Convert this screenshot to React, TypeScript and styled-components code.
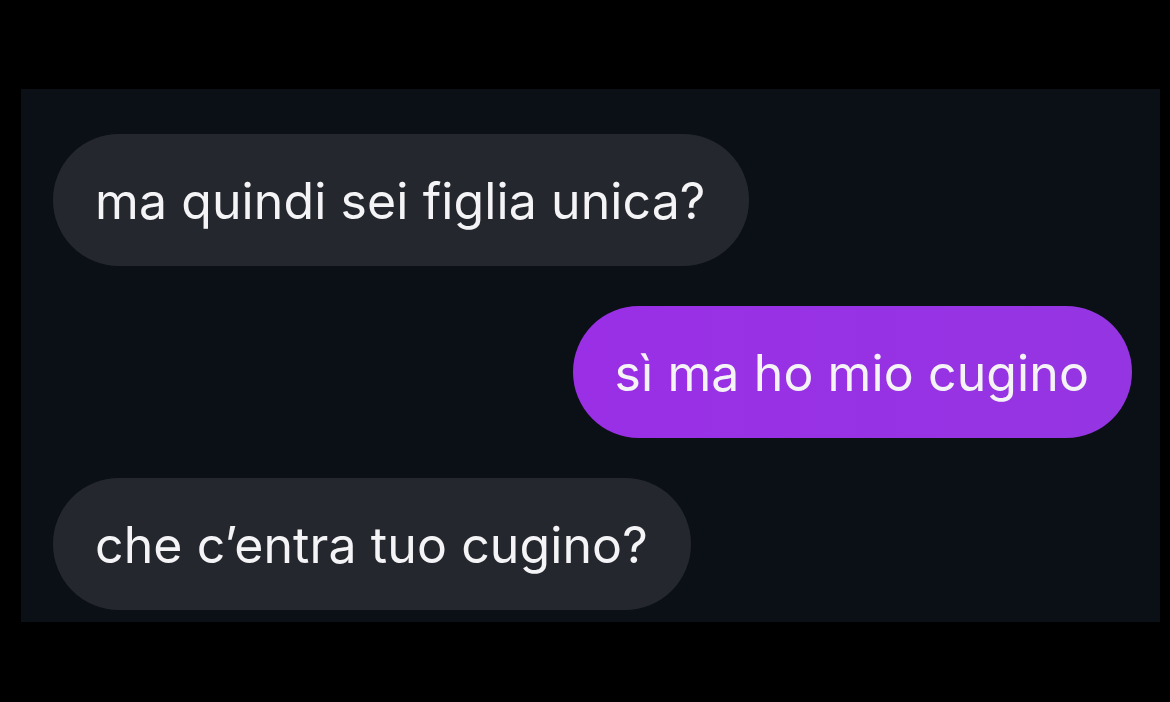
import React from "react";
import styled, { createGlobalStyle } from "styled-components";

const Global = createGlobalStyle`
  html, body { margin: 0; padding: 0; background: #000; }
  body { width: 1170px; height: 702px; overflow: hidden; }
`;

const Screen = styled.div`
  width: 1170px;
  height: 702px;
  background: #000;
  padding: 89px 10px 0 21px;
  box-sizing: border-box;
`;

const Panel = styled.div`
  width: 1139px;
  height: 533px;
  background: #0b1017;
  box-sizing: border-box;
  padding: 45px 28px 0 32px;
  display: flex;
  flex-direction: column;
  gap: 40px;
  overflow: hidden;
`;

const Row = styled.div<{ $mine?: boolean }>`
  display: flex;
  justify-content: ${(p) => (p.$mine ? "flex-end" : "flex-start")};
`;

const Bubble = styled.div<{ $mine?: boolean }>`
  height: 132px;
  border-radius: 66px;
  box-sizing: border-box;
  padding: 2px 43px 0 42px;
  display: flex;
  align-items: center;
  font-family: Inter, "Noto Sans", sans-serif;
  font-size: 50px;
  letter-spacing: 0.1px;
  color: #f4f4f6;
  white-space: nowrap;
  background: ${(p) =>
    p.$mine
      ? "linear-gradient(90deg, #9a2fe6 0%, #9535e2 100%)"
      : "#25272e"};
`;

export default function App() {
  return (
    <>
      <Global />
      <Screen>
        <Panel>
          <Row>
            <Bubble>ma quindi sei figlia unica?</Bubble>
          </Row>
          <Row $mine>
            <Bubble $mine>sì ma ho mio cugino</Bubble>
          </Row>
          <Row>
            <Bubble>che c’entra tuo cugino?</Bubble>
          </Row>
        </Panel>
      </Screen>
    </>
  );
}
